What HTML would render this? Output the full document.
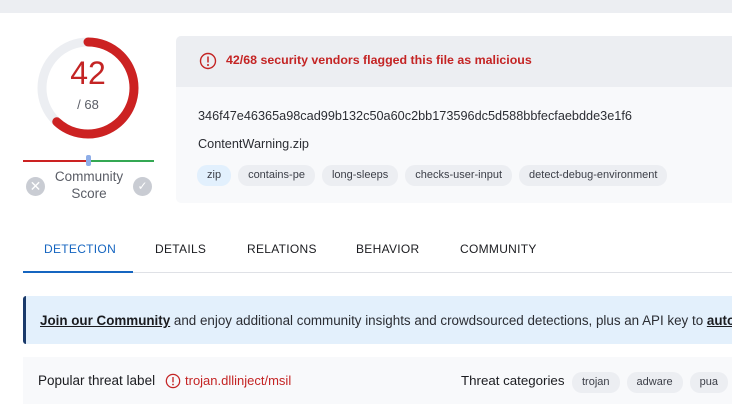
<!DOCTYPE html>
<html><head><style>
*{margin:0;padding:0;box-sizing:border-box}
body{width:732px;height:404px;overflow:hidden;background:#fff;font-family:"Liberation Sans",sans-serif;color:#1b1c20;position:relative}
.abs{position:absolute}
.pill{display:inline-block;height:21px;line-height:21px;padding:0 10px;border-radius:10px;background:#eceef2;font-size:11px;color:#3b3e47;margin-right:7px}
.tab{position:absolute;top:242px;font-size:12px;color:#1b1c20;letter-spacing:.3px}
</style></head><body>
<div class="abs" style="left:0;top:0;width:732px;height:13px;background:#eceef2"></div>

<svg class="abs" style="left:34px;top:34px" width="108" height="108" viewBox="0 0 108 108">
<circle cx="54" cy="54" r="46" fill="none" stroke="#eceef2" stroke-width="9"/>
<circle cx="54" cy="54" r="46" fill="none" stroke="#cc2222" stroke-width="9" stroke-linecap="round" stroke-dasharray="178.6 289" transform="rotate(-90 54 54)"/>
</svg>
<div class="abs" style="left:34px;top:55px;width:108px;text-align:center;font-size:32px;color:#c42424">42</div>
<div class="abs" style="left:34px;top:97px;width:108px;text-align:center;font-size:13px;color:#5a5d66">/ 68</div>

<div class="abs" style="left:23px;top:160px;width:66px;height:2px;background:#cc2222"></div>
<div class="abs" style="left:89px;top:160px;width:65px;height:2px;background:#34a853"></div>
<div class="abs" style="left:86px;top:155px;width:5px;height:11px;background:#8eaee8;border-radius:2px"></div>
<div class="abs" style="left:26px;top:177px;width:19px;height:19px;border-radius:50%;background:#c9ccd3;color:#fff;text-align:center;font-size:14px;line-height:19px">✕</div>
<div class="abs" style="left:133px;top:177px;width:19px;height:19px;border-radius:50%;background:#c9ccd3;color:#fff;text-align:center;font-size:12px;line-height:19px">✓</div>
<div class="abs" style="left:44px;top:168px;width:90px;text-align:center;font-size:13.5px;line-height:17px;color:#5a5d66">Community<br>Score</div>

<div class="abs" style="left:176px;top:36px;width:556px;height:167px;background:#f8f9fb;border-radius:5px 0 0 5px;overflow:hidden">
 <div style="height:51px;background:#eceef2;position:relative">
  <svg class="abs" style="left:23px;top:16px" width="18" height="18" viewBox="0 0 18 18"><circle cx="9" cy="9" r="7.5" fill="none" stroke="#c42424" stroke-width="1.4"/><line x1="9" y1="4.5" x2="9" y2="10.5" stroke="#c42424" stroke-width="1.5"/><circle cx="9" cy="13" r="1" fill="#c42424"/></svg>
  <div class="abs" style="left:50px;top:17px;font-size:12.4px;font-weight:bold;color:#c42424">42/68 security vendors flagged this file as malicious</div>
 </div>
 <div class="abs" style="left:22px;top:73px;font-size:12.7px;color:#2b2d33">346f47e46365a98cad99b132c50a60c2bb173596dc5d588bbfecfaebdde3e1f6</div>
 <div class="abs" style="left:22px;top:101px;font-size:12.7px;color:#2b2d33">ContentWarning.zip</div>
 <div class="abs" style="left:21px;top:129px;white-space:nowrap"><span class="pill" style="background:#e2f0fd">zip</span><span class="pill">contains-pe</span><span class="pill">long-sleeps</span><span class="pill">checks-user-input</span><span class="pill">detect-debug-environment</span></div>
</div>

<div class="tab" style="left:44px;color:#1565c0">DETECTION</div>
<div class="tab" style="left:155px">DETAILS</div>
<div class="tab" style="left:247px">RELATIONS</div>
<div class="tab" style="left:356px">BEHAVIOR</div>
<div class="tab" style="left:460px">COMMUNITY</div>
<div class="abs" style="left:23px;top:272px;width:709px;height:1px;background:#dfe1e6"></div>
<div class="abs" style="left:23px;top:271px;width:110px;height:2px;background:#1565c0"></div>

<div class="abs" style="left:23px;top:296px;width:709px;height:48px;background:#e3f0fc;border-left:3px solid #1a3a6b;border-radius:3px 0 0 3px;overflow:hidden">
<div class="abs" style="left:14px;top:17px;font-size:13.4px;color:#2b2d33;white-space:nowrap"><b style="text-decoration:underline;color:#1b1c20">Join our Community</b> and enjoy additional community insights and crowdsourced detections, plus an API key to <b style="text-decoration:underline;color:#1b1c20">automate checks.</b></div>
</div>

<div class="abs" style="left:23px;top:357px;width:709px;height:47px;background:#f8f9fb"></div>
<div class="abs" style="left:38px;top:373px;font-size:13.5px;color:#1b1c20">Popular threat label</div>
<svg class="abs" style="left:165px;top:373px" width="16" height="16" viewBox="0 0 18 18"><circle cx="9" cy="9" r="7.5" fill="none" stroke="#c42424" stroke-width="1.4"/><line x1="9" y1="4.5" x2="9" y2="10.5" stroke="#c42424" stroke-width="1.5"/><circle cx="9" cy="13" r="1" fill="#c42424"/></svg>
<div class="abs" style="left:185px;top:373px;font-size:13px;color:#c42424">trojan.dllinject/msil</div>
<div class="abs" style="left:461px;top:373px;font-size:13.3px;color:#1b1c20">Threat categories</div>
<div class="abs" style="left:572px;top:372px;white-space:nowrap"><span class="pill">trojan</span><span class="pill">adware</span><span class="pill">pua</span></div>
</body></html>
